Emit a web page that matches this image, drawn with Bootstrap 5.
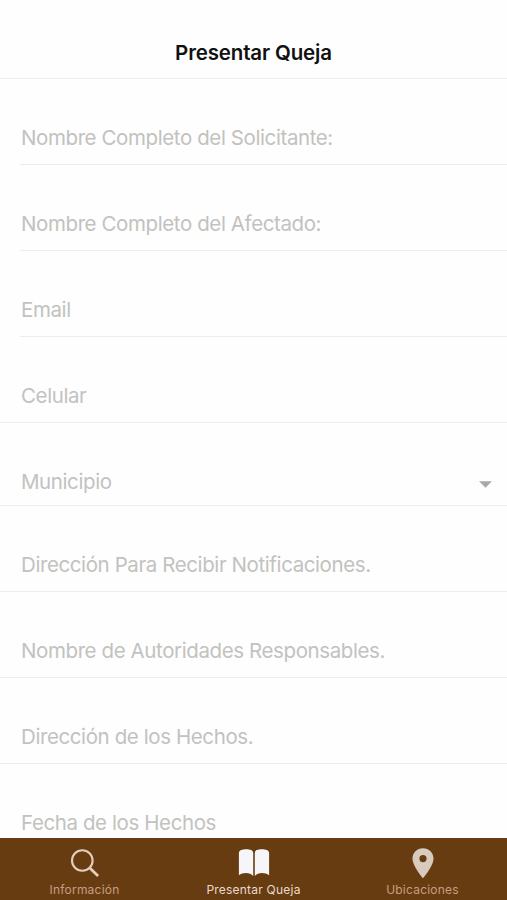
<!DOCTYPE html>
<html lang="es">
<head>
<meta charset="utf-8">
<meta name="viewport" content="width=device-width, initial-scale=1">
<title>Presentar Queja</title>
<link href="https://cdn.jsdelivr.net/npm/bootstrap@5.3.0/dist/css/bootstrap.min.css" rel="stylesheet">
<style>
body { font-family: Inter, "Liberation Sans", sans-serif; background: #fefefe; }
.screen { height: 900px; }
.title-bar { height: 79px; padding-bottom: 12px; border-bottom: 1px solid #f0f0f0; }
.title-bar h1 { font-size: 20.5px; line-height: 26px; font-weight: 600; color: #111; letter-spacing: -.15px; }
.field { height: 86px; padding: 0 15px 12px 21px; border-bottom: 1px solid #ededed; font-size: 20.5px; line-height: 28px; color: #c2c2be; letter-spacing: -.4px; }
.field.inset { margin-left: 20px; padding-left: 1px; }
.field.picker { height: 83px; padding-bottom: 9px; }
.caret { margin-bottom: 8px; }
.tabs { height: 62px; background: #683c11; color: #c69e82; }
.tabs a { color: inherit; padding-top: 9px; font-size: 12px; line-height: 16px; letter-spacing: .22px; }
.tabs a.active { color: #e8d9cc; }
.tabs svg { margin-bottom: 3px; }
</style>
</head>
<body>
<div class="screen d-flex flex-column overflow-hidden">
  <header class="title-bar d-flex align-items-end justify-content-center flex-shrink-0">
    <h1 class="m-0"><span>Presentar Queja</span></h1>
  </header>
  <main class="flex-grow-1 overflow-hidden">
    <div class="field inset d-flex align-items-end"><span>Nombre Completo del Solicitante:</span></div>
    <div class="field inset d-flex align-items-end"><span>Nombre Completo del Afectado:</span></div>
    <div class="field inset d-flex align-items-end"><span>Email</span></div>
    <div class="field d-flex align-items-end"><span>Celular</span></div>
    <div class="field picker d-flex align-items-end justify-content-between">
      <span>Municipio</span>
      <svg class="caret" width="13" height="7" viewBox="0 0 13 7"><path d="M0 .3h13L6.5 6.8z" fill="#a9a9a9"/></svg>
    </div>
    <div class="field d-flex align-items-end"><span>Dirección Para Recibir Notificaciones.</span></div>
    <div class="field d-flex align-items-end"><span>Nombre de Autoridades Responsables.</span></div>
    <div class="field d-flex align-items-end"><span>Dirección de los Hechos.</span></div>
    <div class="field d-flex align-items-end"><span>Fecha de los Hechos</span></div>
  </main>
  <nav class="tabs d-flex flex-shrink-0">
    <a href="#" class="col d-flex flex-column align-items-center text-decoration-none">
      <svg width="32" height="32" viewBox="0 0 32 32" fill="none" stroke="#e3cdbd"><circle cx="13.3" cy="13.5" r="10.3" stroke-width="2.1"/><path d="M20.8 21l8.3 8" stroke-width="2.8"/></svg>
      <span>Información</span>
    </a>
    <a href="#" class="col active d-flex flex-column align-items-center text-decoration-none">
      <svg width="32" height="32" viewBox="0 0 32 32" fill="#f6f6f8"><path d="M.9 6C.9 3.200 4.500 2.200 8.200 2.200C12 2.200 15.200 3.200 15.200 6V29C12.500 25.300 5 24.800 .9 28.300z"/><path d="M31.100 6C31.100 3.200 27.500 2.200 23.800 2.200C20 2.200 16.800 3.200 16.800 6V29C19.500 25.300 27 24.800 31.100 28.300z"/></svg>
      <span>Presentar Queja</span>
    </a>
    <a href="#" class="col d-flex flex-column align-items-center text-decoration-none">
      <svg width="32" height="32" viewBox="0 0 32 32" fill="#d9cabe"><path fill-rule="evenodd" d="M16 1.200C10 1.200 5.500 5.800 5.500 11.600C5.500 19.200 16 31.300 16 31.300S26.500 19.200 26.500 11.600C26.500 5.800 22 1.200 16 1.200zM16 8a3.600 3.600 0 1 1 0 7.200a3.600 3.600 0 1 1 0-7.200z"/></svg>
      <span>Ubicaciones</span>
    </a>
  </nav>
</div>
<script src="https://cdn.jsdelivr.net/npm/bootstrap@5.3.0/dist/js/bootstrap.bundle.min.js"></script>
</body>
</html>
